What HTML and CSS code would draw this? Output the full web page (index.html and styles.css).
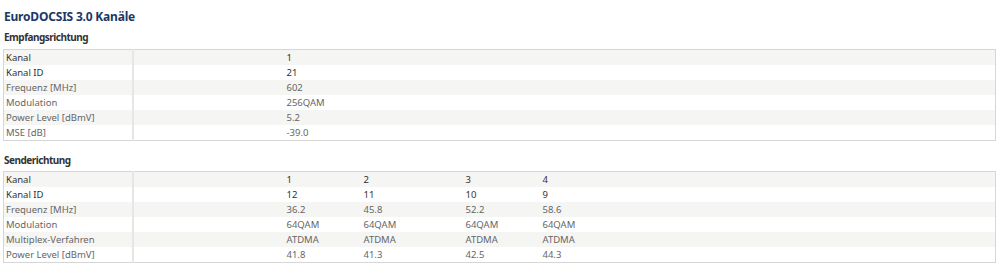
FILE: index.html
```html
<!DOCTYPE html>
<html lang="de">
<head>
<meta charset="utf-8">
<title>EuroDOCSIS 3.0 Kanäle</title>
<link rel="stylesheet" href="styles.css">
</head>
<body>
<div class="page">
  <h1 class="title">EuroDOCSIS 3.0 Kanäle</h1>
  <h2 class="section">Empfangsrichtung</h2>
  <table class="chan">
    <colgroup><col class="c-label"><col class="c-gap"><col class="c-a"><col class="c-b"><col class="c-a"><col></colgroup>
    <tr class="head"><td>Kanal</td><td></td><td>1</td><td></td><td></td><td></td></tr>
    <tr class="head"><td>Kanal ID</td><td></td><td>21</td><td></td><td></td><td></td></tr>
    <tr><td>Frequenz [MHz]</td><td></td><td>602</td><td></td><td></td><td></td></tr>
    <tr><td>Modulation</td><td></td><td>256QAM</td><td></td><td></td><td></td></tr>
    <tr><td>Power Level [dBmV]</td><td></td><td>5.2</td><td></td><td></td><td></td></tr>
    <tr><td>MSE [dB]</td><td></td><td>-39.0</td><td></td><td></td><td></td></tr>
  </table>
  <h2 class="section section-2">Senderichtung</h2>
  <table class="chan">
    <colgroup><col class="c-label"><col class="c-gap"><col class="c-a"><col class="c-b"><col class="c-a"><col></colgroup>
    <tr class="head"><td>Kanal</td><td></td><td>1</td><td>2</td><td>3</td><td>4</td></tr>
    <tr class="head"><td>Kanal ID</td><td></td><td>12</td><td>11</td><td>10</td><td>9</td></tr>
    <tr><td>Frequenz [MHz]</td><td></td><td>36.2</td><td>45.8</td><td>52.2</td><td>58.6</td></tr>
    <tr><td>Modulation</td><td></td><td>64QAM</td><td>64QAM</td><td>64QAM</td><td>64QAM</td></tr>
    <tr><td>Multiplex-Verfahren</td><td></td><td>ATDMA</td><td>ATDMA</td><td>ATDMA</td><td>ATDMA</td></tr>
    <tr><td>Power Level [dBmV]</td><td></td><td>41.8</td><td>41.3</td><td>42.5</td><td>44.3</td></tr>
  </table>
</div>
</body>
</html>
```
FILE: styles.css
```css
html, body {
  margin: 0;
  padding: 0;
  background: #fff;
}
body {
  font-family: "Noto Sans", "Open Sans", sans-serif;
  color: #555;
}
.page {
  padding: 9px 3px 0 3px;
}
.title {
  margin: 0 0 0 1px;
  font-size: 12px;
  letter-spacing: -0.2px;
  line-height: 16px;
  font-weight: 700;
  color: #1b3766;
}
.section {
  margin: 5px 0 5px 1px;
  font-size: 10px;
  letter-spacing: -0.5px;
  line-height: 14px;
  font-weight: 700;
  color: #333;
}
.section-2 {
  margin-top: 12px;
  margin-bottom: 4px;
}
.chan {
  width: 993px;
  border-collapse: collapse;
  border: 1px solid #d6d6d6;
  table-layout: fixed;
  font-size: 9.5px;
}
.c-label { width: 129px; }
.c-gap { width: 152px; }
.c-a { width: 77px; }
.c-b { width: 102px; }
.chan td {
  height: 15px;
  padding: 0 2px;
  line-height: 15px;
  white-space: nowrap;
  color: #666;
}
.chan td:first-child {
  border-right: 2px solid #e6e6e6;
}
.chan tr:nth-child(odd) td {
  background: #f5f5f4;
}
.chan tr.head td {
  color: #333;
}
```
